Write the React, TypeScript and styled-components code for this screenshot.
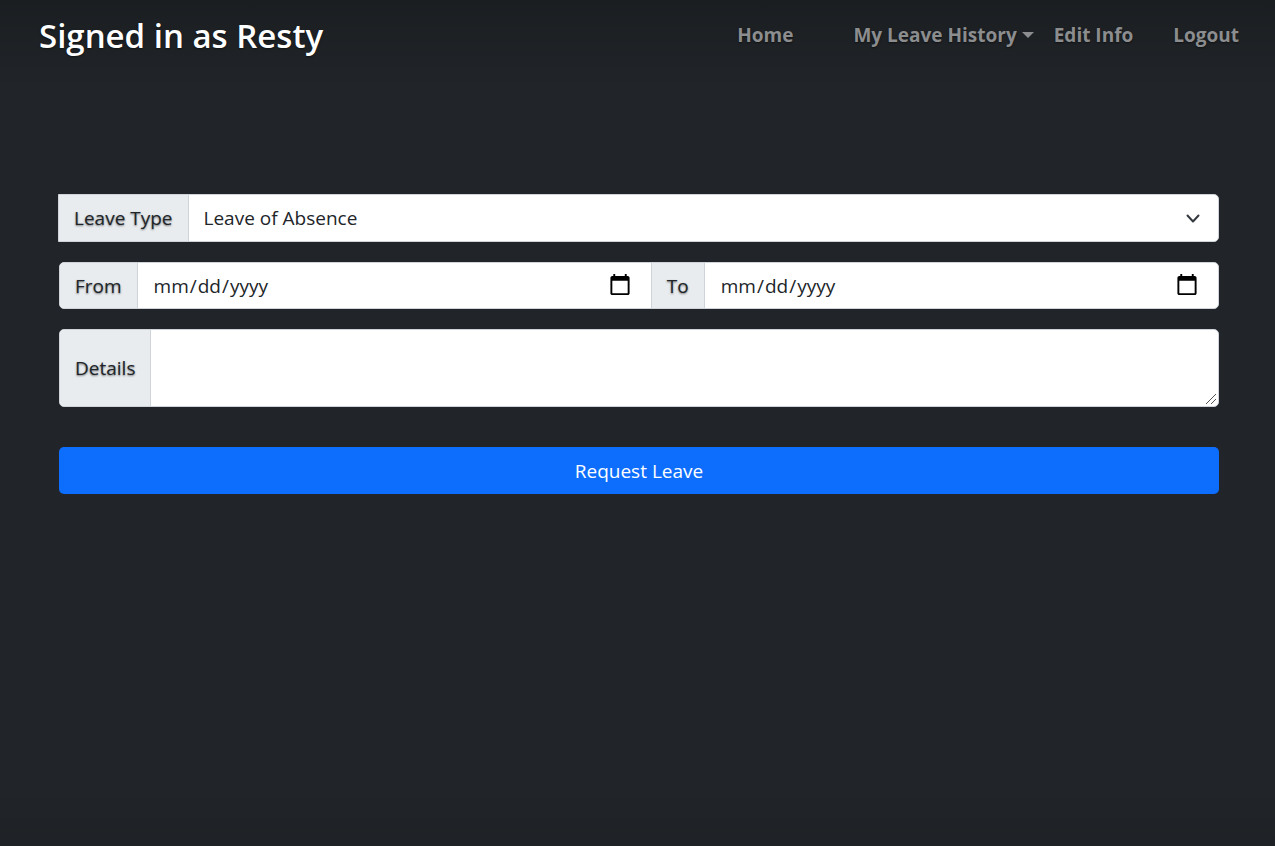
import React from "react";
import styled, { createGlobalStyle } from "styled-components";

const GlobalStyle = createGlobalStyle`
  *, *::before, *::after { box-sizing: border-box; }
  body {
    margin: 0;
    background: #212529;
    color: #212529;
    font-family: "Segoe UI", "Open Sans", "Noto Sans", sans-serif;
    font-size: 19px;
    line-height: 30px;
  }
`;

const Cover = styled.div`
  min-height: 100vh;
  padding: 15px 36px 20px 39px;
  background:
    linear-gradient(to bottom, rgba(0, 0, 0, 0.2), rgba(0, 0, 0, 0) 90px),
    linear-gradient(to top, rgba(0, 0, 0, 0.09), rgba(0, 0, 0, 0) 60px),
    #212529;
  text-shadow: 0 1px 2px rgba(0, 0, 0, 0.5);
`;

const Header = styled.header`
  display: flex;
  flex-wrap: wrap;
  justify-content: space-between;
  align-items: flex-start;
  gap: 10px 40px;
`;

const Title = styled.h1`
  margin: 0;
  color: #fff;
  font-size: 33px;
  line-height: 42px;
  font-weight: 600;
`;

const Nav = styled.nav`
  display: flex;
  padding-top: 5px;
`;

const NavLink = styled.a<{ $gap?: number }>`
  display: flex;
  align-items: center;
  gap: 5px;
  margin-left: ${({ $gap = 0 }) => $gap}px;
  color: #8c8d8f;
  font-weight: 700;
  text-decoration: none;
`;

const Caret = styled.span`
  border: 6px solid transparent;
  border-top-color: currentColor;
  border-bottom: 0;
`;

const Form = styled.form`
  display: flex;
  flex-direction: column;
  gap: 20px;
  padding: 137px 20px 0;
`;

const InputGroup = styled.div<{ $squareStart?: boolean }>`
  display: flex;
  overflow: hidden;
  margin-left: ${({ $squareStart }) => ($squareStart ? "-1px" : "0")};
  border: 1px solid #ced4da;
  border-radius: ${({ $squareStart }) => ($squareStart ? "0 5px 5px 0" : "5px")};
  background: #fff;
`;

const GroupLabel = styled.label<{ $inner?: boolean }>`
  display: flex;
  align-items: center;
  padding: 0 15px;
  border-right: 1px solid #ced4da;
  border-left: ${({ $inner }) => ($inner ? "1px solid #ced4da" : "0")};
  background: #e9ecef;
  white-space: nowrap;
`;

const SelectWrap = styled.div`
  display: grid;
  flex: 1;
  align-items: center;

  & > * { grid-area: 1 / 1; }
  & > svg { justify-self: end; margin-right: 15px; pointer-events: none; }
`;

const Select = styled.select`
  appearance: none;
  width: 100%;
  height: 46px;
  padding: 0 45px 0 15px;
  border: 0;
  background: transparent;
  color: #212529;
  font: inherit;
`;

const DateInput = styled.input`
  flex: 1;
  min-width: 0;
  height: 45px;
  padding: 0 15px;
  border: 0;
  background: transparent;
  color: #212529;
  font: inherit;

  &::-webkit-calendar-picker-indicator {
    width: 24px;
    height: 24px;
    padding: 0 4px 2px;
    box-sizing: content-box;
  }
`;

const TextAreaWrap = styled.div`
  display: grid;
  flex: 1;

  & > * { grid-area: 1 / 1; }
  & > svg { place-self: end; margin: 2px; pointer-events: none; }
`;

const TextArea = styled.textarea`
  display: block;
  width: 100%;
  height: 76px;
  padding: 8px 15px;
  border: 0;
  background: transparent;
  color: #212529;
  font: inherit;
  resize: vertical;

  &::-webkit-resizer { display: none; }
`;

const SubmitButton = styled.button`
  height: 47px;
  margin-top: 20px;
  border: 0;
  border-radius: 5px;
  background: #0d6efd;
  color: #fff;
  font: inherit;
`;

export default function App() {
  return (
    <Cover>
      <GlobalStyle />
      <Header>
        <Title>Signed in as Resty</Title>
        <Nav>
          <NavLink href="#home">Home</NavLink>
          <NavLink href="#history" $gap={60}>
            My Leave History
            <Caret />
          </NavLink>
          <NavLink href="#edit" $gap={20}>Edit Info</NavLink>
          <NavLink href="#logout" $gap={40}>Logout</NavLink>
        </Nav>
      </Header>
      <Form>
        <InputGroup $squareStart>
          <GroupLabel htmlFor="leave-type">Leave Type</GroupLabel>
          <SelectWrap>
            <Select id="leave-type" defaultValue="absence">
              <option value="absence">Leave of Absence</option>
            </Select>
            <svg width="20" height="20" viewBox="0 0 20 20" fill="none" stroke="#343a40" strokeWidth="2" strokeLinecap="round" strokeLinejoin="round">
              <path d="m4.5 7.5 5.5 6 5.5-6" />
            </svg>
          </SelectWrap>
        </InputGroup>
        <InputGroup>
          <GroupLabel htmlFor="from">From</GroupLabel>
          <DateInput id="from" type="date" />
          <GroupLabel htmlFor="to" $inner>To</GroupLabel>
          <DateInput id="to" type="date" />
        </InputGroup>
        <InputGroup>
          <GroupLabel htmlFor="details">Details</GroupLabel>
          <TextAreaWrap>
            <TextArea id="details" />
            <svg width="10" height="10" viewBox="0 0 10 10" stroke="#555" strokeWidth="1">
              <path d="M0 10 10 0M5 10l5-5" />
            </svg>
          </TextAreaWrap>
        </InputGroup>
        <SubmitButton type="button">Request Leave</SubmitButton>
      </Form>
    </Cover>
  );
}
